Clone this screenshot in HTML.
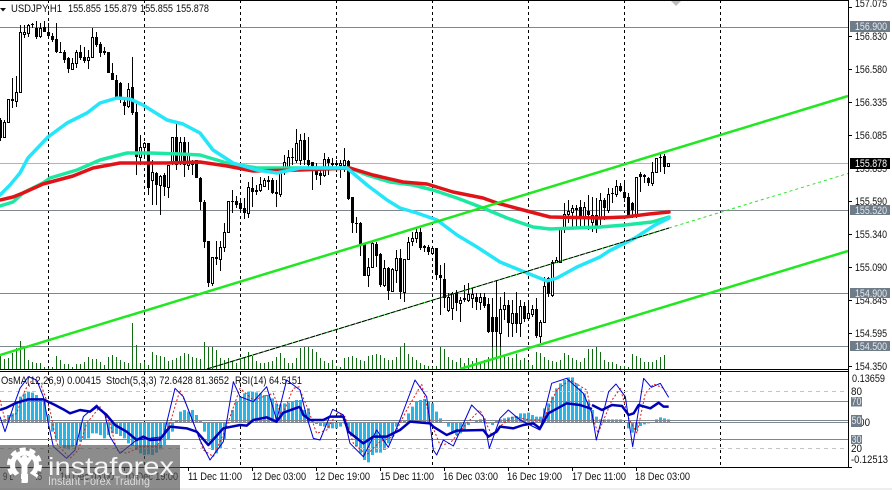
<!DOCTYPE html>
<html><head><meta charset="utf-8"><style>
html,body{margin:0;padding:0;background:#fff;width:892px;height:490px;overflow:hidden}
svg{display:block;filter:blur(.3px)}
text{font-family:"Liberation Sans",sans-serif;font-size:11px;fill:#111}
.n{vector-effect:non-scaling-stroke}
</style></head><body>
<svg width="892" height="490" viewBox="0 0 892 490" xmlns="http://www.w3.org/2000/svg">
<rect width="892" height="490" fill="#fff"/>
<rect y="488" width="892" height="2" fill="#eeeeee"/>
<!-- grid -->
<path d="M48.5 0V369M144.5 0V369M240.5 0V369M336.5 0V369M432.5 0V369M528.5 0V369M624.5 0V369M720.5 0V369M48.5 372V467M144.5 372V467M240.5 372V467M336.5 372V467M432.5 372V467M528.5 372V467M624.5 372V467M720.5 372V467" stroke="#000" stroke-width="1" stroke-dasharray="3 3" fill="none"/>
<!-- levels -->
<path d="M0 27.5H848M0 210.5H848M0 293.5H848M0 346.5H848" stroke="#7f8890" fill="none"/>
<path d="M0 163.5H848" stroke="#b4b4b4" fill="none"/>
<!-- volumes -->
<path fill="none" stroke="#0f6b0f" d="M0.5 356V369M4.5 359V369M8.5 358V369M12.5 353V369M16.5 348V369M20.5 341V369M24.5 347V369M28.5 360V369M32.5 362V369M36.5 363V369M40.5 363V369M44.5 367V369M48.5 368V369M52.5 367V369M56.5 356V369M60.5 360V369M64.5 364V369M68.5 364V369M72.5 367V369M76.5 364V369M80.5 364V369M84.5 362V369M88.5 357V369M92.5 359V369M96.5 359V369M100.5 362V369M104.5 365V369M108.5 357V369M112.5 355V369M116.5 357V369M120.5 360V369M124.5 362V369M128.5 363V369M132.5 323V369M136.5 345V369M140.5 363V369M144.5 362V369M148.5 365V369M152.5 352V369M156.5 355V369M160.5 356V369M164.5 357V369M168.5 361V369M172.5 360V369M176.5 358V369M180.5 356V369M184.5 353V369M188.5 354V369M192.5 357V369M196.5 358V369M200.5 359V369M204.5 342V369M208.5 347V369M212.5 347V369M216.5 350V369M220.5 358V369M224.5 360V369M228.5 358V369M232.5 361V369M236.5 363V369M240.5 358V369M244.5 357V369M248.5 352V369M252.5 356V369M256.5 361V369M260.5 363V369M264.5 363V369M268.5 362V369M272.5 361V369M276.5 357V369M280.5 353V369M284.5 358V369M288.5 363V369M292.5 363V369M296.5 358V369M300.5 348V369M304.5 347V369M308.5 347V369M312.5 349V369M316.5 352V369M320.5 358V369M324.5 361V369M328.5 363V369M332.5 360V369M336.5 366V369M340.5 367V369M344.5 358V369M348.5 357V369M352.5 356V369M356.5 358V369M360.5 360V369M364.5 361V369M368.5 356V369M372.5 355V369M376.5 354V369M380.5 355V369M384.5 358V369M388.5 360V369M392.5 360V369M396.5 357V369M400.5 347V369M404.5 343V369M408.5 354V369M412.5 357V369M416.5 360V369M420.5 363V369M424.5 365V369M428.5 366V369M432.5 367V369M436.5 366V369M440.5 347V369M444.5 349V369M448.5 357V369M452.5 360V369M456.5 362V369M460.5 358V369M464.5 363V369M468.5 358V369M472.5 361V369M476.5 358V369M480.5 363V369M484.5 360V369M488.5 357V369M492.5 332V369M496.5 332V369M500.5 332V369M504.5 355V369M508.5 357V369M512.5 358V369M516.5 354V369M520.5 360V369M524.5 358V369M528.5 362V369M532.5 365V369M536.5 352V369M540.5 353V369M544.5 357V369M548.5 360V369M552.5 361V369M556.5 362V369M560.5 360V369M564.5 353V369M568.5 355V369M572.5 358V369M576.5 360V369M580.5 362V369M584.5 358V369M588.5 349V369M592.5 349V369M596.5 347V369M600.5 352V369M604.5 360V369M608.5 362V369M612.5 362V369M616.5 364V369M620.5 366V369M624.5 366V369M628.5 367V369M632.5 354V369M636.5 356V369M640.5 358V369M644.5 362V369M648.5 362V369M652.5 362V369M656.5 360V369M660.5 357V369M664.5 355V369"/>
<!-- wicks -->
<path fill="none" stroke="#000" d="M0.5 118V141M4.5 120V138M8.5 99V123M12.5 78V108M16.5 76V107M20.5 25V92M24.5 25V38M28.5 24V37M32.5 23V28M36.5 21V39M40.5 23V38M44.5 21V32M48.5 23V37M52.5 33V42M56.5 23V53M60.5 42V53M64.5 50V63M68.5 57V73M72.5 58V70M76.5 50V68M80.5 45V60M84.5 47V63M88.5 50V69M92.5 28V57M96.5 32V47M100.5 42V57M104.5 47V55M108.5 52V73M112.5 63V80M116.5 75V98M120.5 82V103M124.5 98V115M128.5 83V108M132.5 57V115M136.5 103V175M140.5 135V165M144.5 142V157M148.5 143V195M152.5 160V205M156.5 172V205M160.5 175V215M164.5 173V196M168.5 165V198M172.5 137V165M176.5 123V170M180.5 137V165M184.5 137V177M188.5 142V170M192.5 160V175M196.5 160V178M200.5 177V210M204.5 200V248M208.5 241V287M212.5 257V286M216.5 241V265M220.5 241V271M224.5 223V252M228.5 201V232M232.5 190V213M236.5 196V208M240.5 198V212M244.5 198V219M248.5 182V218M252.5 177V207M256.5 185V195M260.5 177V192M264.5 178V187M268.5 176V190M272.5 178V194M276.5 180V207M280.5 168V197M284.5 155V175M288.5 150V170M292.5 148V165M296.5 129V163M300.5 134V165M304.5 133V165M308.5 137V170M312.5 162V190M316.5 163V180M320.5 170V185M324.5 153V177M328.5 157V175M332.5 158V170M336.5 160V172M340.5 160V178M344.5 148V172M348.5 160V200M352.5 197V233M356.5 217V233M360.5 222V256M364.5 243V276M368.5 258V287M372.5 242V268M376.5 242V267M380.5 253V287M384.5 260V287M388.5 267V300M392.5 268V292M396.5 250V283M400.5 249V299M404.5 259V302M408.5 237V260M412.5 232V246M416.5 228V243M420.5 228V250M424.5 245V252M428.5 245V255M432.5 247V254M436.5 248V280M440.5 265V315M444.5 263V308M448.5 293V312M452.5 292V320M456.5 290V311M460.5 297V322M464.5 285V302M468.5 283V302M472.5 288V308M476.5 293V310M480.5 293V310M484.5 293V308M488.5 298V333M492.5 298V347M496.5 280V347M500.5 297V347M504.5 292V320M508.5 300V337M512.5 300V337M516.5 292V333M520.5 300V337M524.5 302V322M528.5 302V320M532.5 305V317M536.5 298V338M540.5 320V343M544.5 277V323M548.5 277V297M552.5 260V297M556.5 257V262M560.5 227V262M564.5 203V233M568.5 200V223M572.5 205V227M576.5 205V228M580.5 200V227M584.5 202V228M588.5 195V230M592.5 197V232M596.5 198V233M600.5 193V225M604.5 198V220M608.5 188V213M612.5 188V203M616.5 180V197M620.5 183V192M624.5 180V202M628.5 193V216M632.5 202V218M636.5 177V218M640.5 172V192M644.5 174V183M648.5 177V186M652.5 162V186M656.5 158V173M660.5 152V172M664.5 154V174M668.5 163V166"/>
<!-- black bodies -->
<path fill="#000" d="M-1 120h3V138h-3zM11 99h3V101h-3zM31 24h3V25h-3zM35 28h3V37h-3zM43 27h3V32h-3zM47 32h3V36h-3zM51 36h3V40h-3zM55 39h3V52h-3zM59 52h3V53h-3zM63 52h3V60h-3zM67 58h3V69h-3zM79 52h3V58h-3zM83 57h3V61h-3zM95 37h3V45h-3zM99 44h3V53h-3zM103 51h3V53h-3zM107 52h3V73h-3zM111 73h3V80h-3zM115 80h3V97h-3zM119 83h3V100h-3zM123 102h3V106h-3zM131 87h3V113h-3zM135 112h3V157h-3zM147 143h3V188h-3zM155 173h3V185h-3zM163 175h3V187h-3zM175 137h3V165h-3zM183 142h3V165h-3zM191 162h3V165h-3zM195 160h3V178h-3zM199 178h3V202h-3zM203 202h3V242h-3zM207 241h3V283h-3zM215 257h3V259h-3zM231 201h3V202h-3zM235 201h3V205h-3zM239 203h3V209h-3zM243 208h3V213h-3zM251 188h3V192h-3zM255 190h3V192h-3zM267 180h3V182h-3zM271 180h3V193h-3zM275 192h3V194h-3zM291 157h3V158h-3zM303 140h3V160h-3zM307 160h3V165h-3zM311 162h3V166h-3zM315 167h3V175h-3zM319 173h3V176h-3zM327 159h3V163h-3zM331 163h3V165h-3zM335 163h3V165h-3zM347 161h3V199h-3zM351 197h3V223h-3zM355 223h3V224h-3zM359 223h3V244h-3zM363 243h3V276h-3zM375 244h3V256h-3zM379 254h3V285h-3zM387 268h3V291h-3zM399 258h3V292h-3zM419 232h3V248h-3zM423 246h3V248h-3zM427 247h3V252h-3zM435 248h3V275h-3zM439 275h3V278h-3zM443 279h3V298h-3zM455 293h3V303h-3zM463 298h3V300h-3zM475 297h3V302h-3zM483 297h3V306h-3zM487 304h3V332h-3zM491 317h3V332h-3zM495 317h3V332h-3zM507 305h3V323h-3zM515 313h3V324h-3zM523 306h3V319h-3zM535 309h3V336h-3zM547 278h3V294h-3zM575 208h3V210h-3zM579 207h3V217h-3zM587 211h3V215h-3zM595 215h3V227h-3zM603 200h3V208h-3zM611 193h3V194h-3zM619 186h3V191h-3zM623 192h3V198h-3zM627 197h3V215h-3zM631 203h3V210h-3zM639 174h3V177h-3zM643 175h3V177h-3zM647 178h3V183h-3zM659 157h3V158h-3zM663 156h3V167h-3z"/>
<!-- white bodies -->
<path fill="#fff" stroke="#000" d="M3.5 122.5h2V137.500h-2zM7.500 99.500h2V122.500h-2zM15.500 92.500h2V101.500h-2zM19.500 32.500h2V92.500h-2zM23.500 32.500h2V34.500h-2zM27.500 25.500h2V33.500h-2zM39.500 28.500h2V36.500h-2zM71.500 63.500h2V69.500h-2zM75.500 52.500h2V63.500h-2zM87.500 57.500h2V60.500h-2zM91.500 37.500h2V57.500h-2zM127.500 89.500h2V106.500h-2zM139.500 147.500h2V157.500h-2zM143.500 143.500h2V147.500h-2zM151.500 172.500h2V180.500h-2zM159.500 176.500h2V185.500h-2zM167.500 165.500h2V187.500h-2zM171.500 137.500h2V163.500h-2zM179.500 142.500h2V162.500h-2zM187.500 153.500h2V165.500h-2zM211.500 257.500h2V283.500h-2zM219.500 247.500h2V259.500h-2zM223.500 232.500h2V247.500h-2zM227.500 201.500h2V232.500h-2zM247.500 187.500h2V213.500h-2zM259.500 184.500h2V190.500h-2zM263.500 180.500h2V186.500h-2zM279.500 172.500h2V194.500h-2zM283.500 162.500h2V170.500h-2zM287.500 157.500h2V167.500h-2zM295.500 143.500h2V160.500h-2zM299.500 140.500h2V160.500h-2zM323.500 159.500h2V175.500h-2zM339.500 163.500h2V165.500h-2zM343.500 160.500h2V165.500h-2zM367.500 267.500h2V275.500h-2zM371.500 243.500h2V267.500h-2zM383.500 268.500h2V285.500h-2zM391.500 269.500h2V291.500h-2zM395.500 258.500h2V270.500h-2zM403.500 259.500h2V292.500h-2zM407.500 242.500h2V259.500h-2zM411.500 238.500h2V241.500h-2zM415.500 232.500h2V238.500h-2zM431.500 248.500h2V253.500h-2zM447.500 297.500h2V310.500h-2zM451.500 293.500h2V308.500h-2zM459.500 300.500h2V303.500h-2zM467.500 294.500h2V300.500h-2zM471.500 294.500h2V298.500h-2zM479.500 297.500h2V302.500h-2zM499.500 309.500h2V333.500h-2zM503.500 305.500h2V309.500h-2zM511.500 313.500h2V323.500h-2zM519.500 306.500h2V323.500h-2zM527.500 313.500h2V318.500h-2zM531.500 309.500h2V314.500h-2zM539.500 322.500h2V336.500h-2zM543.500 286.500h2V322.500h-2zM551.500 262.500h2V295.500h-2zM555.500 260.500h2V262.500h-2zM559.500 228.500h2V262.500h-2zM563.500 214.500h2V228.500h-2zM567.500 211.500h2V214.500h-2zM571.500 208.500h2V212.500h-2zM583.500 207.500h2V217.500h-2zM591.500 215.500h2V222.500h-2zM599.500 200.500h2V218.500h-2zM607.500 194.500h2V210.500h-2zM615.500 186.500h2V194.500h-2zM635.500 177.500h2V215.500h-2zM651.500 172.500h2V183.500h-2zM655.500 158.500h2V172.500h-2zM667.500 163.500h2V166.500h-2z"/>
<!-- moving averages -->
<g fill="none" stroke-width="3.500" stroke-linejoin="round" stroke-linecap="round">
<polyline stroke="#1de8a2" points="0,206 13,202 23,193 43,183 50,178 77,170 100,160 127,153 150,153 180,154 200,155 227,163 257,168 300,168 350,168 367,175 390,182 413,185 433,190 457,198 483,208 507,218 533,227 550,229 600,227 625,225 652,222 669,217"/>
<polyline stroke="#e01418" points="0,200 13,197 23,193 43,184 73,176 93,168 120,163 167,163 200,162 227,166 253,171 300,170 350,168 373,175 403,182 427,184 453,192 483,198 497,203 527,211 550,217 600,218 625,217 649,214 669,212"/>
<polyline stroke="#24e6f8" points="0,195 10,185 20,173 28,158 48,137 67,123 87,113 100,103 117,98 130,99 143,105 167,120 183,124 200,133 213,150 233,163 257,170 277,173 300,168 347,168 367,185 387,200 400,208 417,213 437,220 457,235 477,247 500,262 527,273 547,281 557,278 577,267 600,257 609,251 635,238 655,225 669,218"/>
</g>
<!-- channels -->
<path d="M0 355L848 96M460 369L848 251" stroke="#20e820" stroke-width="2.500" fill="none"/>
<path d="M207 369L669 228" stroke="#20e820" fill="none"/>
<path d="M207 369L669 228" stroke="#000" stroke-dasharray="5 1" fill="none"/>
<path d="M669 228L848 173.500" stroke="#20e820" stroke-dasharray="3 3" fill="none"/>
<polygon points="670,0 682,0 676,6" fill="#bdbdbd"/>
<!-- frame -->
<path d="M0 .5H849M848.500 0V467.500M0 369.500H849M0 371.500H849M0 467.500H849" stroke="#000" fill="none"/>
<path d="M848 7.500h4M848 36.500h4M848 69.500h4M848 102.500h4M848 135.500h4M848 201.500h4M848 234.500h4M848 267.500h4M848 300.500h4M848 333.500h4M848 366.500h4M848 467.500h4M60.500 467V471M124.500 467V471M188.500 467V471M252.500 467V471M316.500 467V471M380.500 467V471M444.500 467V471M508.500 467V471M572.500 467V471M636.500 467V471" stroke="#000" fill="none"/>
<!-- legend -->
<polygon points="0,8 6,8 3,11.500" fill="#111"/>
<text x="11" y="12" textLength="51" lengthAdjust="spacingAndGlyphs">USDJPY,H1</text>
<text x="68" y="12" textLength="33" lengthAdjust="spacingAndGlyphs">155.855</text>
<text x="104" y="12" textLength="33" lengthAdjust="spacingAndGlyphs">155.879</text>
<text x="140" y="12" textLength="33" lengthAdjust="spacingAndGlyphs">155.855</text>
<text x="176" y="12" textLength="33" lengthAdjust="spacingAndGlyphs">155.878</text>
<!-- price axis -->
<text x="855" y="7" textLength="32" lengthAdjust="spacingAndGlyphs">157.075</text>
<text x="855" y="40" textLength="32" lengthAdjust="spacingAndGlyphs">156.830</text>
<text x="855" y="73" textLength="32" lengthAdjust="spacingAndGlyphs">156.580</text>
<text x="855" y="106" textLength="32" lengthAdjust="spacingAndGlyphs">156.335</text>
<text x="855" y="139" textLength="32" lengthAdjust="spacingAndGlyphs">156.085</text>
<text x="855" y="172" textLength="32" lengthAdjust="spacingAndGlyphs">155.835</text>
<text x="855" y="205" textLength="32" lengthAdjust="spacingAndGlyphs">155.590</text>
<text x="855" y="238" textLength="32" lengthAdjust="spacingAndGlyphs">155.340</text>
<text x="855" y="271" textLength="32" lengthAdjust="spacingAndGlyphs">155.090</text>
<text x="855" y="304" textLength="32" lengthAdjust="spacingAndGlyphs">154.845</text>
<text x="855" y="337" textLength="32" lengthAdjust="spacingAndGlyphs">154.595</text>
<text x="855" y="370" textLength="32" lengthAdjust="spacingAndGlyphs">154.350</text>
<rect x="850" y="21" width="40" height="11" fill="#6e7b89"/><text x="855" y="30" textLength="32" lengthAdjust="spacingAndGlyphs" style="fill:#e6eaee">156.900</text>
<rect x="850" y="158" width="40" height="11" fill="#000"/><text x="855" y="167" textLength="32" lengthAdjust="spacingAndGlyphs" style="fill:#fff">155.878</text>
<rect x="850" y="205" width="40" height="10" fill="#6e7b89"/><text x="855" y="214" textLength="32" lengthAdjust="spacingAndGlyphs" style="fill:#e6eaee">155.520</text>
<rect x="850" y="288" width="40" height="10" fill="#6e7b89"/><text x="855" y="297" textLength="32" lengthAdjust="spacingAndGlyphs" style="fill:#e6eaee">154.900</text>
<rect x="850" y="341" width="40" height="10" fill="#6e7b89"/><text x="855" y="350" textLength="32" lengthAdjust="spacingAndGlyphs" style="fill:#e6eaee">154.500</text>
<!-- OsMA histogram -->
<g transform="translate(0,360) scale(.33333)" fill="none" stroke="#2ab5e6" stroke-width="3">
<path class="n" d="M13.500 187V178M25.500 187V165M37.500 187V160M49.500 187V130M61.500 187V110M73.500 187V100M85.500 187V95M97.500 187V98M109.500 187V105M121.500 187V115M133.500 187V125M145.500 187V165M157.500 187V215M169.500 187V240M181.500 187V255M193.500 187V265M205.500 187V268M217.500 187V260M229.500 187V255M241.500 187V245M253.500 187V240M265.500 187V235M277.500 187V220M289.500 187V220M301.500 187V225M313.500 187V235M325.500 187V225M337.500 187V220M349.500 187V222M361.500 187V228M373.500 187V235M385.500 187V250M397.500 187V258M409.500 187V270M421.500 187V280M433.500 187V285M445.500 187V283M457.500 187V285M469.500 187V278M481.500 187V268M493.500 187V255M505.500 187V240M517.500 187V215M529.500 187V180M541.500 187V155M553.500 187V150M565.500 187V155M577.500 187V150M589.500 187V165M601.500 187V182M613.500 187V215M625.500 187V245M637.500 187V270M649.500 187V280M661.500 187V265M673.500 187V240M685.500 187V190M697.500 187V150M709.500 187V125M721.500 187V110M733.500 187V100M745.500 187V95M757.500 187V95M769.500 187V97M781.500 187V100M793.500 187V105M805.500 187V105M817.500 187V115M829.500 187V130M841.500 187V133M853.500 187V130M865.500 187V128M877.500 187V125M889.500 187V120"/>
</g>
<g transform="translate(300,360) scale(.33333)" fill="none" stroke="#2ab5e6" stroke-width="3">
<path class="n" d="M1.500 187V120M13.500 187V150M25.500 187V145M37.500 187V180M49.500 187V192M61.500 187V198M73.500 187V200M85.500 187V205M97.500 187V205M109.500 187V205M121.500 187V200M133.500 187V190M145.500 187V210M157.500 187V225M169.500 187V260M181.500 187V280M193.500 187V300M205.500 187V307M217.500 187V285M229.500 187V278M241.500 187V278M253.500 187V270M265.500 187V250M277.500 187V230M289.500 187V200M301.500 187V187M313.500 187V180M325.500 187V160M337.500 187V140M349.500 187V125M361.500 187V120M373.500 187V117M385.500 187V125M397.500 187V130M409.500 187V155M421.500 187V175M445.500 187V200M457.500 187V220M469.500 187V225M481.500 187V220M493.500 187V210M505.500 187V195M517.500 187V188M529.500 187V180M541.500 187V178M553.500 187V175M565.500 187V190M577.500 187V195M589.500 187V180M601.500 187V178M613.500 187V175M625.500 187V172M637.500 187V170M649.500 187V168M661.500 187V160M673.500 187V160M685.500 187V158M697.500 187V165M709.500 187V170M721.500 187V170M733.500 187V145M745.500 187V130M757.500 187V110M769.500 187V85M781.500 187V70M793.500 187V60M805.500 187V52M817.500 187V52M829.500 187V70M841.500 187V85M853.500 187V100M865.500 187V125M877.500 187V150M889.500 187V170"/>
</g>
<g transform="translate(592,360) scale(.33333)" fill="none" stroke="#2ab5e6" stroke-width="3">
<path class="n" d="M25.500 187V178M37.500 187V178M49.500 187V178M61.500 187V178M73.500 187V178M85.500 187V178M109.500 187V205M121.500 187V218M133.500 187V210M145.500 187V198M157.500 187V193M169.500 187V190M193.500 187V178M205.500 187V172M217.500 187V175M229.500 187V178"/>
</g>
<!-- indicator levels -->
<path d="M0 401.500H848M0 420.500H848M0 422.500H848M0 439.500H848" stroke="#7f8890" fill="none"/>
<path d="M0 391.500H848M0 448.500H848" stroke="#c4c4c4" stroke-dasharray="4 4" fill="none"/>
<!-- oscillators -->
<g fill="none" stroke-linejoin="round">
<g transform="translate(0,360) scale(.33333)">
<polyline class="n" stroke="#e01818" stroke-dasharray="2 2" points="0,120 15,180 50,160 75,90 100,55 125,80 150,150 170,250 210,295 235,270 260,190 300,140 330,190 350,270 380,280 420,260 470,260 510,190 540,90 570,160 610,270 640,290 680,200 720,85 760,120 820,100 845,170 880,85 900,80"/>
<polyline class="n" stroke="#0000d8" points="0,170 15,215 40,140 60,85 85,50 110,60 130,110 145,190 160,260 200,295 225,270 250,170 290,135 315,165 330,230 360,280 385,260 410,240 490,230 525,85 550,110 600,240 630,300 670,245 700,65 720,110 760,125 800,80 830,180 860,60 900,90"/>
<polyline class="n" stroke="#0000b8" stroke-width="2.500" points="0,150 20,143 50,128 85,118 130,118 165,135 190,148 210,160 240,150 270,155 290,140 320,165 345,195 380,215 410,240 430,230 450,240 480,238 510,200 560,205 590,215 625,255 670,205 720,195 740,197 760,180 800,172 830,185 850,158 900,140"/>
</g>
<g transform="translate(300,360) scale(.33333)">
<polyline class="n" stroke="#e01818" stroke-dasharray="2 2" points="0,90 25,150 50,220 80,210 110,160 135,170 160,250 200,285 240,245 280,230 320,150 365,72 390,180 420,255 450,250 500,190 540,150 575,225 610,190 640,170 690,180 730,180 770,90 810,60 860,90 876,165"/>
<polyline class="n" stroke="#0000d8" points="0,90 20,170 40,235 60,240 98,148 130,165 150,250 190,290 230,210 265,262 300,180 345,60 380,110 400,270 410,285 430,240 460,258 515,135 550,170 568,265 600,175 625,150 660,180 720,210 755,70 800,55 850,100 876,160"/>
<polyline class="n" stroke="#0000b8" stroke-width="2.500" points="0,140 10,165 30,180 70,180 90,170 130,170 145,215 190,250 220,230 260,230 300,210 330,185 390,190 400,200 440,225 470,212 550,210 565,230 590,215 600,200 640,205 670,195 700,190 720,205 745,160 800,130 840,135 876,147"/>
</g>
<g transform="translate(592,360) scale(.33333)">
<polyline class="n" stroke="#e01818" stroke-dasharray="2 2" points="0,165 18,220 60,120 85,85 110,175 135,220 160,100 185,72 215,85"/>
<polyline class="n" stroke="#0000d8" points="0,160 13,240 50,95 72,72 100,110 122,260 155,55 178,82 205,70 230,112"/>
<polyline class="n" stroke="#0000b8" stroke-width="2.500" points="0,135 30,150 60,135 90,138 110,165 125,160 140,135 175,145 200,128 215,140 230,140"/>
</g>
</g>
<text x="1" y="384" textLength="100" lengthAdjust="spacingAndGlyphs">OsMA(12,26,9) 0.00415</text>
<text x="106" y="384" textLength="123" lengthAdjust="spacingAndGlyphs">Stoch(5,3,3) 72.6428 81.3652</text>
<text x="235" y="384" textLength="67" lengthAdjust="spacingAndGlyphs">RSI(14) 64.5151</text>
<!-- indicator axis -->
<text x="852" y="382" textLength="33" lengthAdjust="spacingAndGlyphs">0.13659</text>
<text x="851" y="395" textLength="11" lengthAdjust="spacingAndGlyphs">80</text>
<rect x="851" y="397" width="11" height="9.500" fill="#6e7b89"/><text x="851.500" y="405" textLength="10" lengthAdjust="spacingAndGlyphs" style="fill:#e6eaee">70</text>
<text x="851" y="426" textLength="19" lengthAdjust="spacingAndGlyphs">0.00</text>
<rect x="851" y="415" width="11" height="12" fill="#6e7b89"/><text x="851.500" y="424" textLength="10" lengthAdjust="spacingAndGlyphs" style="fill:#e6eaee">50</text>
<rect x="851" y="435" width="11" height="9" fill="#6e7b89"/><text x="851.500" y="443" textLength="10" lengthAdjust="spacingAndGlyphs" style="fill:#e6eaee">30</text>
<text x="851" y="452" textLength="11" lengthAdjust="spacingAndGlyphs">20</text>
<text x="851" y="463" textLength="37" lengthAdjust="spacingAndGlyphs">-0.12513</text>
<!-- time axis -->
<text x="3" y="480" textLength="39" lengthAdjust="spacingAndGlyphs">9 Dec 2025</text>
<text x="60" y="480" textLength="54" lengthAdjust="spacingAndGlyphs">10 Dec 03:00</text>
<text x="124" y="480" textLength="54" lengthAdjust="spacingAndGlyphs">10 Dec 19:00</text>
<text x="188" y="480" textLength="54" lengthAdjust="spacingAndGlyphs">11 Dec 11:00</text>
<text x="252" y="480" textLength="54" lengthAdjust="spacingAndGlyphs">12 Dec 03:00</text>
<text x="315" y="480" textLength="55" lengthAdjust="spacingAndGlyphs">12 Dec 19:00</text>
<text x="380" y="480" textLength="54" lengthAdjust="spacingAndGlyphs">15 Dec 11:00</text>
<text x="443" y="480" textLength="55" lengthAdjust="spacingAndGlyphs">16 Dec 03:00</text>
<text x="507" y="480" textLength="55" lengthAdjust="spacingAndGlyphs">16 Dec 19:00</text>
<text x="572" y="480" textLength="54" lengthAdjust="spacingAndGlyphs">17 Dec 11:00</text>
<text x="635" y="480" textLength="55" lengthAdjust="spacingAndGlyphs">18 Dec 03:00</text>
<!-- logo -->
<rect x="0" y="445" width="180" height="45" fill="#505050" fill-opacity=".66"/>
<g fill="none" stroke="#fff">
<circle cx="24.500" cy="465" r="12" stroke-width="5"/>
<circle cx="24.500" cy="465" r="15.500" stroke-width="4" stroke-dasharray="6 3.740"/>
<path d="M18 457L24.500 466L31 457" stroke-width="4"/>
<path d="M24.500 464V483" stroke-width="6"/>
</g>
<path d="M13 477L21 472V484H13zM36 477L28 472V484H36z" fill="#8d8d8d"/>
<circle cx="24.500" cy="459" r="3.500" fill="#fff"/>
<text x="48" y="475" textLength="126" lengthAdjust="spacingAndGlyphs" style="font-size:25px;fill:#f4f4f4">instaforex</text>
<text x="48" y="485" textLength="102" lengthAdjust="spacingAndGlyphs" style="font-size:11.500px;fill:#dcdcdc">Instant Forex Trading</text>
</svg>
</body></html>
